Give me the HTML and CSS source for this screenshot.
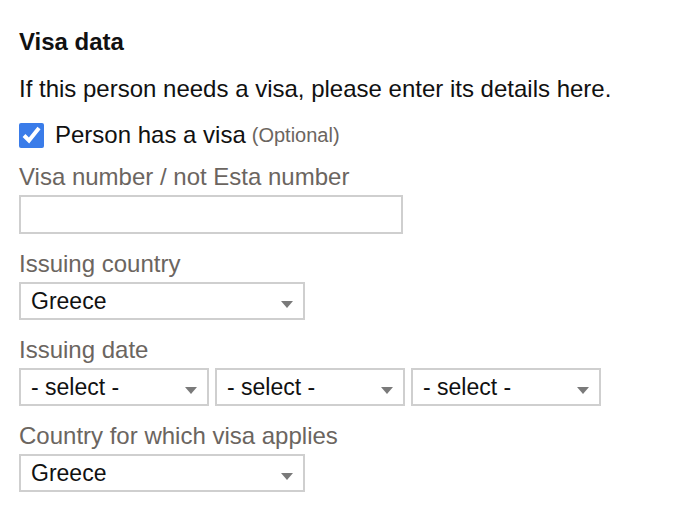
FILE: index.html
```html
<!DOCTYPE html>
<html lang="en">
<head>
    <meta charset="UTF-8">
    <meta name="viewport" content="width=device-width, initial-scale=1.0">
    <title>Visa data</title>
    <link rel="stylesheet" href="styles.css">
</head>
<body>
    <div class="visa-form">
        <h2 class="title">Visa data</h2>
        <p class="intro">If this person needs a visa, please enter its details here.</p>

        <label class="check-row">
            <input type="checkbox" checked>
            <span>Person has a visa</span>
            <span class="optional">(Optional)</span>
        </label>

        <div class="field first">
            <label class="field-label" for="visaNumber">Visa number / not Esta number</label>
            <input type="text" id="visaNumber" class="text-input">
        </div>

        <div class="field">
            <label class="field-label" for="issuingCountry">Issuing country</label>
            <div class="select wide">
                <select id="issuingCountry">
                    <option>Greece</option>
                </select>
            </div>
        </div>

        <div class="field">
            <label class="field-label">Issuing date</label>
            <div class="date-row">
                <div class="select">
                    <select><option>- select -</option></select>
                </div>
                <div class="select">
                    <select><option>- select -</option></select>
                </div>
                <div class="select">
                    <select><option>- select -</option></select>
                </div>
            </div>
        </div>

        <div class="field">
            <label class="field-label" for="visaCountry">Country for which visa applies</label>
            <div class="select wide">
                <select id="visaCountry">
                    <option>Greece</option>
                </select>
            </div>
        </div>
    </div>
</body>
</html>
```

FILE: styles.css
```css
body {
    margin: 0;
    background: #fff;
    font-family: "Liberation Sans", Arial, sans-serif;
    color: #111;
}

.visa-form {
    padding: 30px 19px 0 19px;
}

.title {
    margin: 0;
    font-size: 24px;
    line-height: 24px;
    font-weight: bold;
}

.intro {
    margin: 23px 0 0 0;
    font-size: 24px;
    line-height: 24px;
}

.check-row {
    display: flex;
    align-items: center;
    margin-top: 21px;
    font-size: 24px;
    line-height: 26px;
    height: 26px;
}

.check-row input {
    width: 25px;
    height: 25px;
    margin: 0 11px 0 0;
    accent-color: #3a7ce9;
}

.optional {
    margin-left: 6px;
    font-size: 20px;
    color: #6b6560;
}

.field {
    margin-top: 18px;
}

.field.first {
    margin-top: 17px;
}

.field-label {
    display: block;
    font-size: 24px;
    line-height: 24px;
    color: #6b6560;
    margin-bottom: 6px;
}

.text-input {
    display: block;
    box-sizing: border-box;
    width: 384px;
    height: 39px;
    border: 2px solid #cfcfcf;
    border-radius: 0;
    padding: 0 10px;
    font: 23px "Liberation Sans", Arial, sans-serif;
    outline: none;
}

.select {
    position: relative;
    width: 190px;
    height: 38px;
}

.select.wide {
    width: 286px;
}

.select select {
    appearance: none;
    -webkit-appearance: none;
    box-sizing: border-box;
    width: 100%;
    height: 100%;
    border: 2px solid #cfcfcf;
    border-radius: 0;
    background: #fff;
    padding: 0 0 0 10px;
    font: 23px "Liberation Sans", Arial, sans-serif;
    color: #111;
    outline: none;
}

.select::after {
    content: "";
    position: absolute;
    right: 12px;
    top: 19px;
    border-left: 6px solid transparent;
    border-right: 6px solid transparent;
    border-top: 7px solid #7a7a7a;
    pointer-events: none;
}

.date-row {
    display: flex;
    gap: 6px;
}
```
